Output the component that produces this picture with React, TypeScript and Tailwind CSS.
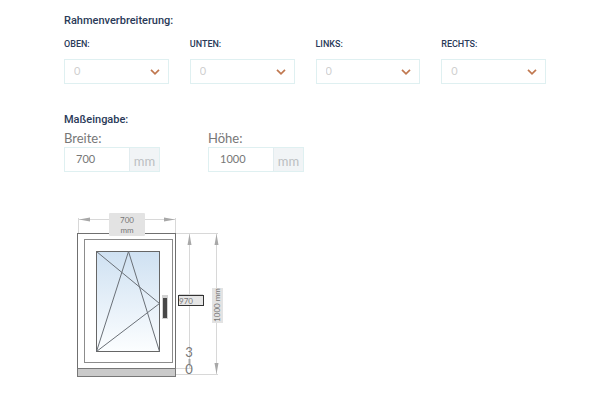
import React, { useState } from 'react';

const SIDES = ['OBEN', 'UNTEN', 'LINKS', 'RECHTS'];

const headingFont = "font-['Roboto','Open_Sans',sans-serif] font-medium text-[#2a3a58]";

const SideSelect: React.FC<{ side: string }> = ({ side }) => {
  const id = `side-${side.toLowerCase()}`;
  return (
    <div>
      <label htmlFor={id} className={`${headingFont} block text-[9px] leading-4 mb-[7px]`}>{side}:</label>
      <div className="relative">
        <select id={id} defaultValue="0" className="block w-full h-[25px] appearance-none border border-[#dff0f1] bg-white pl-[9px] text-[11px] text-[#cfcfcf] outline-none">
          <option value="0">0</option>
          <option value="30">30</option>
          <option value="60">60</option>
        </select>
        <svg viewBox="0 0 10 6" className="pointer-events-none absolute right-[9px] top-[10px] w-[10px] h-[6px]" fill="none" stroke="#c07850" strokeWidth="1.7">
          <path d="M1 0.8 L5 4.8 L9 0.8" />
        </svg>
      </div>
    </div>
  );
};

const SizeInput: React.FC<{ id: string; label: string; value: string; onChange: (v: string) => void }> = ({ id, label, value, onChange }) => (
  <div className="w-24">
    <label htmlFor={id} className="block text-[13px] leading-[18px] text-[#777]">{label}</label>
    <div className="flex h-[25px] border border-[#dff0f1]">
      <input id={id} value={value} onChange={(e) => onChange(e.target.value)} className="w-0 flex-1 bg-white pl-[11px] text-[11px] text-[#777] outline-none" />
      <span className="w-[30px] border-l border-[#e2ecef] bg-[#f1f4f6] pt-1 text-center text-[13px] leading-[18px] text-[#bcbfc2]">mm</span>
    </div>
  </div>
);

const WindowDrawing: React.FC<{ width: string; height: string }> = ({ width, height }) => {
  const [sash, setSash] = useState('970');
  return (
    <div className="relative w-[170px]">
      <svg viewBox="0 0 170 180" className="block w-[170px] h-[180px]" fill="none">
        <defs>
          <linearGradient id="glass" x1="0" y1="0" x2="0" y2="1">
            <stop offset="0" stopColor="#cfe1f2" />
            <stop offset="1" stopColor="#fcfeff" />
          </linearGradient>
        </defs>

        {/* dimension lines */}
        <g stroke="#d8d8d8">
          <path d="M14.5 13V28 M111.5 13V28 M14 14.5H112" />
          <path d="M112 28.5H154 M112 163.5H128 M112 169.5H154" />
          <path d="M125.5 29V163 M152.5 29V169 M115 89.5H139" />
        </g>
        <g fill="#a8a8a8">
          <path d="M15 14.5L26 12.5V16.5Z M111 14.5L100 12.5V16.5Z" />
          <path d="M125.5 29L123.5 40H127.5Z" />
          <path d="M152.5 29L150.5 40H154.5Z M152.5 169L150.5 158H154.5Z" />
          <path d="M124.5 154H126.5V159H124.5Z" />
        </g>

        {/* frame, sash and sill */}
        <rect x="13.5" y="28.5" width="98" height="135" fill="#fff" stroke="#707070" />
        <rect x="20.5" y="34.5" width="88" height="123" stroke="#8c8c8c" />
        <rect x="13.5" y="163.5" width="98" height="8" fill="#cacaca" stroke="#777" />

        {/* glass with opening direction */}
        <rect x="32.5" y="46.5" width="63" height="100" fill="url(#glass)" stroke="#666" />
        <path d="M32.5 146.5L64.5 46.5L95.5 146.5 M32.5 46.5L95.5 98.5L32.5 146.5" stroke="#6a7077" />
        <rect x="98" y="90" width="6" height="24" fill="#d2d2d2" />
        <rect x="99" y="93" width="4" height="20" fill="#484848" />

        <g className="text-[8px]" fill="#777" textAnchor="middle">
          <rect x="45" y="8" width="36" height="23" rx="1" fill="#e3e3e3" />
          <text x="63" y="18">{width}</text>
          <text x="63" y="28">mm</text>
          <rect x="148" y="83" width="11" height="35" fill="#e3e3e3" />
          <text transform="translate(156 100) rotate(-90)">{height} mm</text>
        </g>
        <g className="text-[13px]" fill="#777" textAnchor="middle">
          <text x="125" y="152">3</text>
          <text x="125" y="169">0</text>
        </g>
      </svg>
      <input aria-label="Flügelhöhe" value={sash} onChange={(e) => setSash(e.target.value)} className="absolute left-[114px] top-[90px] w-[26px] h-[11px] border border-[#333] bg-[#e6e6e6] text-[8px] leading-[9px] text-[#777] outline-none" />
    </div>
  );
};

const App: React.FC = () => {
  const [width, setWidth] = useState('700');
  const [height, setHeight] = useState('1000');

  return (
    <main className="min-h-screen bg-white pl-16 pr-[54px] pt-3 font-['Lato','Open_Sans',sans-serif]">
      <section>
        <h2 className={`${headingFont} text-[11px] leading-[18px] mb-[6px]`}>Rahmenverbreiterung:</h2>
        <div className="grid grid-cols-4 gap-[21px]">
          {SIDES.map(s => <SideSelect key={s} side={s} />)}
        </div>
      </section>

      <section className="mt-[27px]">
        <h2 className={`${headingFont} text-[11px] leading-[18px]`}>Maßeingabe:</h2>
        <div className="flex gap-12">
          <SizeInput id="breite" label="Breite:" value={width} onChange={setWidth} />
          <SizeInput id="hoehe" label="Höhe:" value={height} onChange={setHeight} />
        </div>
      </section>

      <section className="mt-[33px]">
        <WindowDrawing width={width} height={height} />
      </section>
    </main>
  );
};

export default App;
